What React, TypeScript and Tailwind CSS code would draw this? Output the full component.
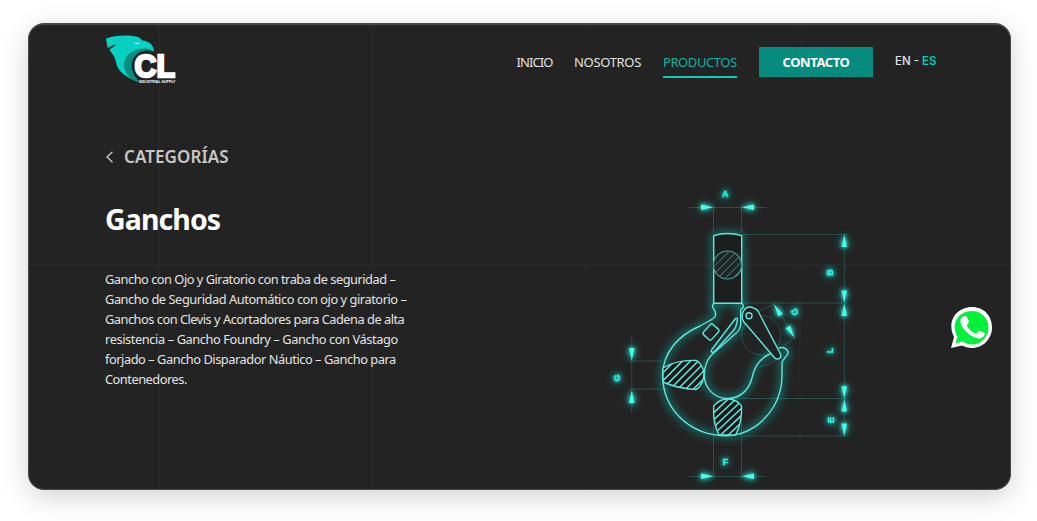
import type { ReactNode } from "react";

function Logo() {
  return (
    <svg viewBox="105 34 74 52" className="block h-[52px] w-[74px] overflow-visible" role="img" aria-label="CL Industrial Supply">
      <path d="M106 38.5C115 35 132 34.5 139 37.5C141 38.500 141 39.500 142 40.300C149 41 154 45 154 52L151 50.5C142 51 137 54 134 61C132.500 68 133.500 75 139 82C129 79 117 72 116 62C115 56 111 53 109.500 49.500L116.500 44.500C113 45 109.500 47 107.500 48Z" fill="#05d0c2" />
      <path d="M139 82C124 78 121 64 127 56C131 50.500 139 48 146 48.500C150 49 153 50 154 52C143 51 136 55 134 62C132.500 69 134 75 139 82Z" fill="#078d80" />
      <path d="M138 80C129 70 130 59 138 53.500C142 50.500 149 49.500 154 52V54L151 58L138 79Z" fill="#202020" />
      <path d="M134 42.800C137 42.500 138.500 42.800 140 43.500C138 44.500 136 44 134 42.800Z" fill="#e6fffb" />
      <text x="134.500" y="77" textLength="40.500" lengthAdjust="spacingAndGlyphs" className="fill-white stroke-white font-['Liberation_Sans',sans-serif] text-[31px] font-bold" strokeWidth="2.400">CL</text>
      <text x="139" y="82.800" textLength="36.500" lengthAdjust="spacingAndGlyphs" className="fill-white font-['Liberation_Sans',sans-serif] text-[4.300px] font-bold">INDUSTRIAL SUPPLY</text>
    </svg>
  );
}

function Header() {
  return (
    <header className="flex h-[76px] items-center pr-[73px] pl-[76px]">
      <div className="mt-[-6px]"><Logo /></div>
      <nav className="mt-[-2px] ml-auto flex items-center text-[13px] text-[#e2e2e2]">
        <a className="mr-[22px] w-[36px] pt-px whitespace-nowrap tracking-[-0.9px]"><span className="ml-[0.500px]">INICIO</span></a>
        <a className="mr-[22px] w-[67px] pt-px whitespace-nowrap tracking-[-0.32px]">NOSOTROS</a>
        <a className="mr-[22px] flex h-[32px] w-[74px] items-center whitespace-nowrap border-y-2 border-t-transparent border-b-[#03cdbd] pt-px tracking-[-0.42px] text-[#0eb3a4]">PRODUCTOS</a>
        <a className="mr-[22px] flex h-[30px] w-[114px] items-center justify-center bg-[#058c7e] pt-px font-bold tracking-[-0.4px] text-white">CONTACTO</a>
        <span className="flex w-[42px] whitespace-pre font-['Inter','Liberation_Sans',sans-serif] text-[11.500px] font-medium">EN - <b className="font-semibold text-[#04cdbd]">ES</b></span>
      </nav>
    </header>
  );
}

const ARROWS: [number, number, number][] = [
  [713.5, 207.3, 0],
  [741.5, 207.3, 180],
  [713.5, 476.3, 0],
  [741.5, 476.3, 180],
  [844.3, 234.5, -90],
  [844.3, 303, 90],
  [844.3, 303.5, -90],
  [844.3, 398.7, 90],
  [844.3, 399, -90],
  [844.3, 436, 90],
  [631.8, 360.5, 90],
  [631.8, 390.5, -90],
  [774, 304.5, -122],
  [794.5, 337.5, 58],
];

const LABELS: [string, number, number, number][] = [
  ["A", 725.2, 194, 0],
  ["B", 829.5, 272.5, -90],
  ["L", 829.5, 350.5, -90],
  ["E", 830.5, 420, -90],
  ["G", 616.7, 378, -90],
  ["F", 725.3, 461.5, 0],
  ["D", 795, 312, 58],
];

function Glow({ children }: { children: ReactNode }) {
  return <g filter="url(#glow)">{children}</g>;
}

function HookDiagram() {
  return (
    <svg viewBox="600 180 260 309" className="block h-[309px] w-[260px]" fill="none" role="img" aria-label="Gancho">
      <defs>
        <filter id="glow" filterUnits="userSpaceOnUse" x="595" y="175" width="270" height="320">
          <feGaussianBlur in="SourceGraphic" stdDeviation="4" result="wide" />
          <feGaussianBlur in="SourceGraphic" stdDeviation="2" result="near" />
          <feMerge><feMergeNode in="wide" /><feMergeNode in="near" /><feMergeNode in="SourceGraphic" /></feMerge>
        </filter>
        <filter id="soft" filterUnits="userSpaceOnUse" x="595" y="175" width="270" height="320">
          <feGaussianBlur stdDeviation="4" />
        </filter>
        <clipPath id="round"><circle cx="727.500" cy="265" r="13.500" /></clipPath>
        <clipPath id="side"><path d="M663 368C672 362.500 685 360 696.700 360.500C701 363 703 368 704 373C704 380 701 387 696 389.500C684 389 672 386 663 382Z" /></clipPath>
        <clipPath id="base"><path d="M713.700 406C718 401 722 399 727.500 399C734 399 738 401 741.500 406C742 417 739.500 428 735.500 435H719C715 427 713 416 713.700 406Z" /></clipPath>
        <path id="body" d="M713.700 303.300V235.600Q727.500 231.500 741.700 235.600V303.300C744.500 306 743.500 308 740.700 309.500V325C740 329 738 332 735 334L711.500 355C706.500 360 704.500 367 704.300 375C704.300 388 714 398.500 727.500 398.500C741 398.500 749 389 752 378C755 363 764 355 775 352.500M779 348C783 346.500 788 349 788 353C787.500 357 782 359 782 363V376C782 386 780 396 773.500 407C763 424 746 435.500 727 435.700C690 435.700 663 410 662.500 375C663 352 679 335 700 326L710 320.500C714 318 716 317 715.500 313C715 309 712 308.500 712.500 305.500L713.700 303.300M713.700 303.300H741.700" />
        <path id="section-side" d="M663 368C672 362.500 685 360 696.700 360.500C701 363 703 368 704 373C704 380 701 387 696 389.500C684 389 672 386 663 382Z" />
        <path id="section-base" d="M713.700 406C718 401 722 399 727.500 399C734 399 738 401 741.500 406C742 417 739.500 428 735.500 435H719C715 427 713 416 713.700 406Z" />
      </defs>

      <g stroke="#2a4d4a" strokeWidth="1">
        <path d="M689 207.500H766M713.500 205V232M741.500 205V232" />
        <path d="M742 234.500H847M742 303H847M727 398.500H847M740 436H847M844.300 235V436" />
        <path d="M631.800 336V413M629 361H663M629 389H668" />
        <path d="M713.500 405V479M741.500 405V479M689 476.500H766" />
        <path d="M749 316L774 304M782 347L796 337M774 304L795 338" />
        <circle cx="761.300" cy="335.300" r="19.700" />
        <path d="M760 366.500C769 365 776 361 781 355" />
      </g>

      <g filter="url(#soft)" stroke="#00d9ca" strokeWidth="3" opacity=".85">
        <use href="#body" />
      </g>
      <path d="M714 303V236Q727.500 232 741.500 236V303Z" fill="#1d1f1f" />
      <g stroke="#61e7dc" strokeWidth="1.400" strokeLinejoin="round" strokeLinecap="round">
        <use href="#body" />
        <g fill="#191919">
          <use href="#section-side" />
          <use href="#section-base" />
        </g>
        <path d="M735.500 318.500C738 317 737.500 320 737 322C736.500 326 735.500 328.500 733 331L714.500 351.500C712.500 353 710.500 352 711.500 350Z" />
        <rect x="705.500" y="325" width="11" height="14" rx="2" transform="rotate(42 711 332)" />
        <path d="M743.500 321.500C740 315 744 307 750 307C753 307 754 309 756 309C758 310 758.500 312 759.500 314L780.500 354C781.500 357 780 359 777.500 359C775.500 359.500 774.500 358 773.500 356.500Z" fill="#222" />
        <circle cx="749" cy="315.700" r="3" />
      </g>
      <circle cx="727.500" cy="265" r="14" stroke="#489e98" fill="#202626" strokeWidth="1.200" />
      <g clipPath="url(#round)" stroke="#408c87" strokeWidth="1">
        {[0, 1, 2, 3, 4, 5].map((n) => <path key={n} d={`M${689 + n * 7.6} 284l38 -38`} />)}
      </g>
      <g clipPath="url(#side)" stroke="#61e7dc" strokeWidth="1.500">
        {[0, 1, 2, 3, 4, 5, 6, 7, 8].map((n) => <path key={n} d={`M${636 + n * 7.8} 392l34 -34`} />)}
      </g>
      <g clipPath="url(#base)" stroke="#61e7dc" strokeWidth="1.500">
        {[0, 1, 2, 3, 4, 5, 6, 7, 8].map((n) => <path key={n} d={`M710 ${409 + n * 7.2}l34 -32`} />)}
      </g>
      <Glow>
        {ARROWS.map(([x, y, turn], i) => (
          <path key={i} d="M0 0L-12.500 -2.700V2.700Z" fill="#40ffee" transform={`translate(${x} ${y}) rotate(${turn})`} />
        ))}
        {LABELS.map(([label, x, y, turn]) => (
          <text key={label} x="0" y="3.200" textAnchor="middle" transform={`translate(${x} ${y}) rotate(${turn})`} className="fill-[#27eee0] stroke-[#27eee0] font-['Liberation_Sans',sans-serif] text-[9px] font-bold" strokeWidth=".4">{label}</text>
        ))}
      </Glow>
    </svg>
  );
}

function WhatsApp() {
  return (
    <svg viewBox="0 0 44 44" className="absolute top-[281px] left-[920px] size-[44px]" role="img" aria-label="WhatsApp">
      <path d="M2 42L5 31C-3 15 8 1 23 1C35 1 43 10 43 21.500C43 33 34 42 23 42C19 42 16 41 13 39.500Z" fill="#fff" />
      <path d="M6.500 37.500L8.500 30.500C1 17 10 5 23 5C32 5 39.500 12 39.500 21.500C39.500 31 32 38.500 23 38.500C19 38.500 16 37 13.500 35.500Z" fill="#00f03c" />
      <path d="M15.500 11.500H17.500L20.200 17C20.200 18.500 18 20 18 21C20 25 23 27.500 27 29C28.500 28.500 29.500 26 30.500 26L36 28.500C36 32 33 34 30 34C21 32.500 12 24 11.500 16.500C11.500 14 13 12 15.500 11.500Z" transform="translate(-.2 -1.500)" fill="#fff" />
    </svg>
  );
}

const DESCRIPTION = [
  { text: "Gancho con Ojo y Giratorio con traba de seguridad –", tracking: "tracking-[-0.48px]" },
  { text: "Gancho de Seguridad Automático con ojo y giratorio –", tracking: "tracking-[-0.44px]" },
  { text: "Ganchos con Clevis y Acortadores para Cadena de alta", tracking: "tracking-[-0.49px]" },
  { text: "resistencia – Gancho Foundry – Gancho con Vástago", tracking: "tracking-[-0.4px]" },
  { text: "forjado – Gancho Disparador Náutico – Gancho para", tracking: "tracking-[-0.45px]" },
  { text: "Contenedores.", tracking: "tracking-[-0.48px]" },
];

export default function App() {
  return (
    <div className="h-[521px] w-[1037px] overflow-hidden bg-white pt-[23px] pl-[28px] font-['Noto_Sans','Open_Sans',sans-serif]">
      <div className="relative h-[467px] w-[983px] overflow-hidden rounded-[16px] border border-t-2 border-[#484a4a] bg-[#232323] bg-[linear-gradient(90deg,transparent_129px,#272727_129px,#272727_131px,transparent_131px,transparent_343px,#272727_343px,#272727_345px,transparent_345px,transparent_556px,#272727_556px,#272727_558px,transparent_558px,transparent_770px,#272727_770px,#272727_772px,transparent_772px),linear-gradient(transparent_239px,#282828_239px,#282828_241px,transparent_241px)] shadow-[0_7px_28px_rgba(0,0,0,0.18)]">
        <Header />
        <main className="flex justify-between pr-[150px] pl-[76px]">
          <section className="pt-[44px] text-[#e4e4e4]">
            <a className="flex h-[24px] items-center text-[#c9c7c5]">
              <svg viewBox="0 0 8 12" className="mr-[10px] h-[12px] w-[9px]" fill="none" stroke="currentColor" strokeWidth="1.400"><path d="M7 .7L1.500 6L7 11.300" /></svg>
              <span className="text-[17px] font-semibold tracking-[0.08px]">CATEGORÍAS</span>
            </a>
            <h1 className="mt-[28px] text-[28.500px] leading-[44px] font-bold tracking-[-0.9px] text-white">Ganchos</h1>
            <p className="mt-[28px] text-[12.800px] leading-[20px]">
              {DESCRIPTION.map((line) => (
                <span key={line.text} className={`block w-max ${line.tracking}`}>{line.text}</span>
              ))}
            </p>
          </section>
          <div className="pt-[79px]"><HookDiagram /></div>
        </main>
        <WhatsApp />
      </div>
    </div>
  );
}
